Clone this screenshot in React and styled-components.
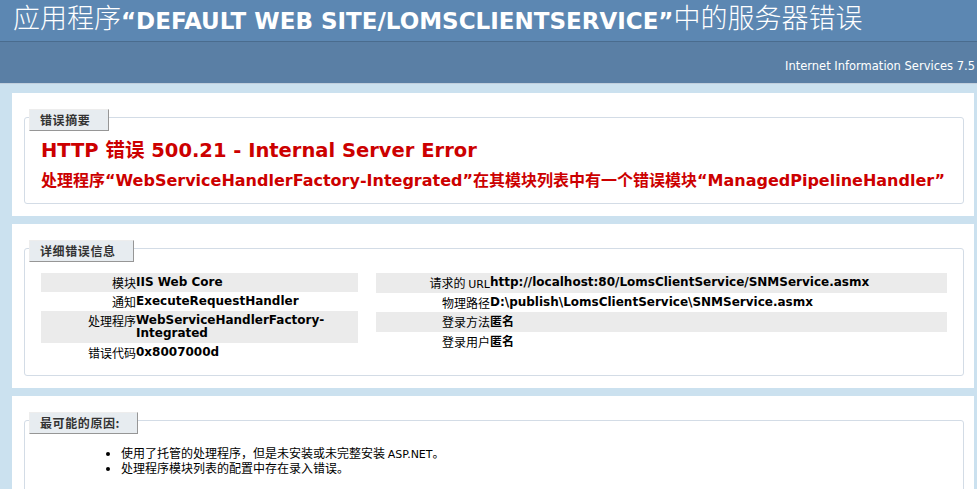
import React from 'react';
import styled, { createGlobalStyle } from 'styled-components';

const GlobalStyle = createGlobalStyle`
  body {
    margin: 0;
    background: #cbe1ef;
    font-family: "DejaVu Sans", "Noto Sans CJK SC", sans-serif;
    font-size: 11px;
    color: #000;
  }
`;

const Header = styled.div`
  background-color: #5c87b2;
  height: 41px;
  padding: 3px 0 0 13px;
  box-sizing: border-box;
`;

const Title = styled.h1`
  margin: 0;
  color: #fff;
  font-family: "DejaVu Sans", "Noto Sans CJK SC", sans-serif;
  font-size: 23px;
  font-weight: bold;
  line-height: 32px;
  white-space: nowrap;
`;

// the Chinese parts of the heading come out thin and a size larger
const Han = styled.span`
  font-family: "Noto Sans CJK SC", sans-serif;
  font-size: 27px;
  font-weight: 300;
  line-height: 1;
  vertical-align: 1px;
`;

const ServerVersion = styled.div`
  background-color: #5a7fa5;
  border-top: 1px solid #4a6c8e;
  border-bottom: 1px solid #c1cfdd;
  height: 43px;
  box-sizing: border-box;
  padding: 17px 2px 0 0;
  color: #fff;
  text-align: right;
  font-size: 11.5px;
  line-height: 14px;
`;

const Content = styled.div`
  padding: 9px 0 0 12px;
  display: flex;
  flex-direction: column;
  gap: 8px;
`;

const Panel = styled.div`
  background: #fff;
  width: 962px;
  box-sizing: border-box;
  padding: 24px 10px ${(p) => p.$bottom ?? 12}px 12px;
`;

const Fieldset = styled.div`
  border: 1px solid #d3dce6;
  border-radius: 3px;
  padding: 0 15px ${(p) => p.$bottom || 0}px 16px;
  min-height: ${(p) => p.$minHeight || 0}px;
`;

const Legend = styled.div`
  margin: -9px 0 0 -12px;
  height: 22px;
  box-sizing: border-box;
  padding: 0 0 0 10px;
  width: ${(p) => p.$width}px;
  background: #e7ecf0;
  border-top: 1px solid #ededed;
  border-left: 1px solid #ededed;
  border-right: 1px solid #969696;
  border-bottom: 1px solid #969696;
  color: #333;
  font-family: "Noto Sans CJK SC", sans-serif;
  font-size: 12px;
  font-weight: bold;
  line-height: 20px;
  letter-spacing: 0.6px;
`;

const ErrorTitle = styled.h2`
  margin: 7px 0 0 0;
  color: #cc0000;
  font-size: 19.5px;
  font-weight: bold;
  line-height: 26px;
  white-space: nowrap;
`;

const ErrorMessage = styled.h3`
  margin: 4px 0 0 0;
  color: #cc0000;
  font-size: 16px;
  font-weight: bold;
  line-height: 26px;
  white-space: nowrap;
`;

const Details = styled.div`
  display: grid;
  grid-template-columns: 317px 571px;
  column-gap: 18px;
  align-items: start;
  padding-top: 11px;
`;

const Table = styled.table`
  width: 100%;
  border-collapse: collapse;
  border: none;
`;

const Row = styled.tr`
  background: ${(p) => (p.$alt ? '#ebebeb' : 'transparent')};
`;

const Th = styled.th`
  width: ${(p) => p.$width}px;
  text-align: right;
  vertical-align: top;
  font-family: "Noto Sans CJK SC", sans-serif;
  font-weight: normal;
  font-size: 12px;
  line-height: 13px;
  padding: 3px 0;
  white-space: nowrap;
`;

const Td = styled.td`
  text-align: left;
  vertical-align: top;
  font-weight: bold;
  font-size: 12px;
  line-height: 13px;
  padding: 3px 0;
`;

const Latin = styled.span`
  font-family: "DejaVu Sans", sans-serif;
  font-size: 11px;
  line-height: 1;
`;

const Cjk = styled.span`
  font-family: "Noto Sans CJK SC", sans-serif;
  line-height: 1;
`;

const CauseList = styled.ul`
  margin: 11px 0 0 64px;
  padding: 0 0 0 16px;
  font-family: "Noto Sans CJK SC", sans-serif;
  font-size: 12px;
  line-height: 15px;

  li::marker {
    font-size: 11px;
  }
`;

const leftRows = [
  ['模块', 'IIS Web Core'],
  ['通知', 'ExecuteRequestHandler'],
  ['处理程序', 'WebServiceHandlerFactory-Integrated'],
  ['错误代码', '0x8007000d'],
];

const rightRows = [
  [<>请求的 <Latin>URL</Latin></>, 'http://localhost:80/LomsClientService/SNMService.asmx'],
  ['物理路径', 'D:\\publish\\LomsClientService\\SNMService.asmx'],
  ['登录方法', <Cjk>匿名</Cjk>],
  ['登录用户', <Cjk>匿名</Cjk>],
];

const DetailTable = ({ rows, labelWidth }) => (
  <Table>
    <tbody>
      {rows.map(([label, value], i) => (
        <Row key={i} $alt={i % 2 === 0}>
          <Th $width={labelWidth}>{label}</Th>
          <Td>{value}</Td>
        </Row>
      ))}
    </tbody>
  </Table>
);

const App = () => {
  return (
    <>
      <GlobalStyle />
      <Header>
        <Title>
          <Han>应用程序</Han>“DEFAULT WEB SITE/LOMSCLIENTSERVICE”<Han>中的服务器错误</Han>
        </Title>
      </Header>
      <ServerVersion>Internet Information Services 7.5</ServerVersion>

      <Content>
        <Panel>
          <Fieldset $bottom={9}>
            <Legend $width={80}>错误摘要</Legend>
            <ErrorTitle>HTTP 错误 500.21 - Internal Server Error</ErrorTitle>
            <ErrorMessage>
              处理程序“WebServiceHandlerFactory-Integrated”在其模块列表中有一个错误模块“ManagedPipelineHandler”
            </ErrorMessage>
          </Fieldset>
        </Panel>

        <Panel>
          <Fieldset $bottom={13}>
            <Legend $width={105}>详细错误信息</Legend>
            <Details>
              <DetailTable rows={leftRows} labelWidth={95} />
              <DetailTable rows={rightRows} labelWidth={114} />
            </Details>
          </Fieldset>
        </Panel>

        <Panel $bottom={0}>
          <Fieldset $minHeight={80}>
            <Legend $width={109}>最可能的原因:</Legend>
            <CauseList>
              <li>使用了托管的处理程序，但是未安装或未完整安装 <Latin>ASP.NET</Latin>。</li>
              <li>处理程序模块列表的配置中存在录入错误。</li>
            </CauseList>
          </Fieldset>
        </Panel>
      </Content>
    </>
  );
};

export default App;
